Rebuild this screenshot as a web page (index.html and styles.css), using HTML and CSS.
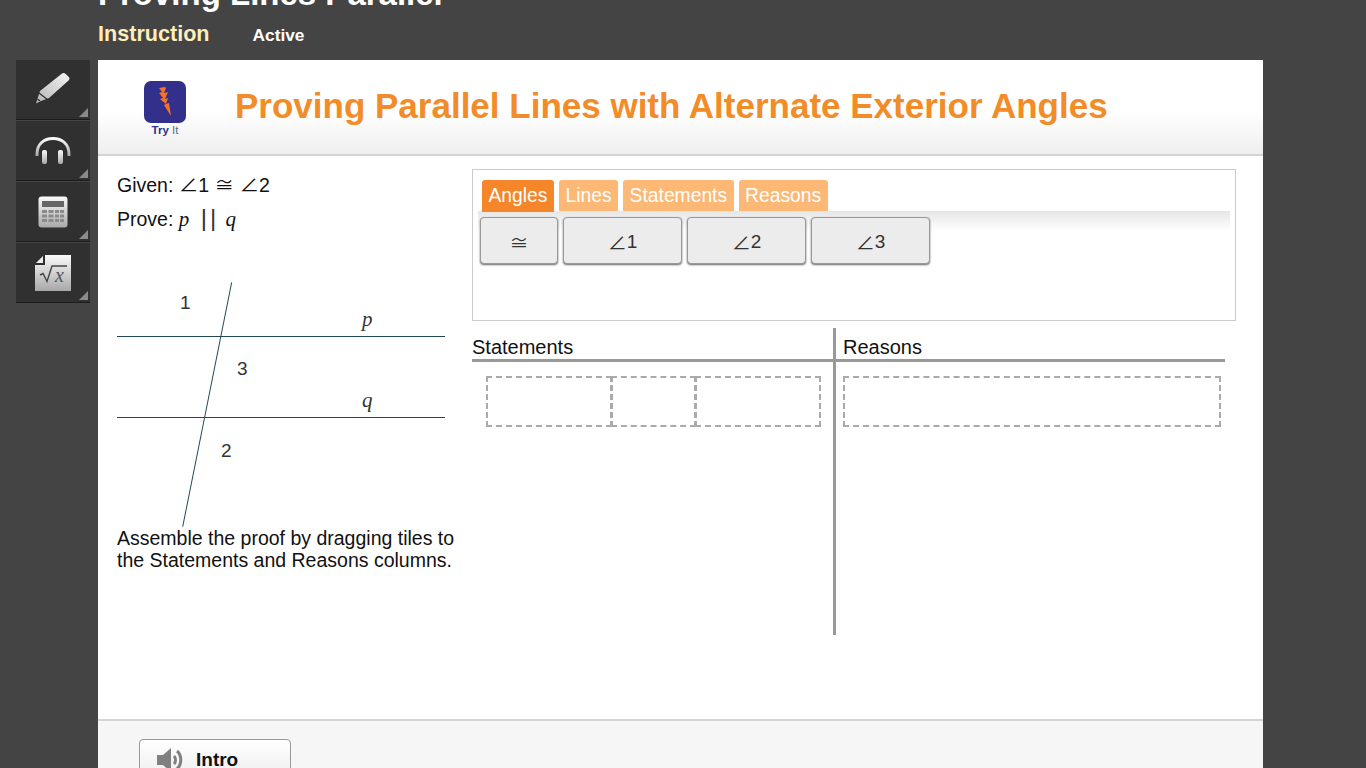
FILE: index.html
```html
<!DOCTYPE html>
<html lang="en">
<head>
<meta charset="utf-8">
<title>Proving Lines Parallel</title>
<link rel="stylesheet" href="styles.css">
</head>
<body>
<svg class="defs" width="0" height="0" aria-hidden="true">
  <defs>
    <linearGradient id="metal" x1="0" y1="0" x2="0" y2="1">
      <stop offset="0" stop-color="#fafafa"/>
      <stop offset="1" stop-color="#a8a8a8"/>
    </linearGradient>
    <linearGradient id="pen" x1="1" y1="0" x2="0" y2="1">
      <stop offset="0" stop-color="#f4f4f4"/>
      <stop offset="1" stop-color="#b5b5b5"/>
    </linearGradient>
  </defs>
</svg>
<header class="lesson-head">
  <h1 class="lesson-title">Proving Lines Parallel</h1>
  <div class="lesson-meta">
    <span class="lesson-kind">Instruction</span>
    <span class="lesson-state">Active</span>
  </div>
</header>
<div class="workspace">
  <nav class="toolbar">
    <button class="tool">
      <svg class="tool-icon" width="38" height="36" viewBox="0 0 38 36">
        <path d="M28 1.500c1-.8 2.300-.8 3.200 0l3.600 3.600c.9.900.9 2.200 0 3.100L15 26l-8 3-5 2.500 1.700-5.200L6 19z" fill="url(#pen)"/>
        <path d="M5 21l9 7M3.500 27l2.500 2" stroke="#2f2f2f" stroke-width="1.200" fill="none"/>
      </svg>
      <span class="corner"></span>
    </button>
    <button class="tool">
      <svg class="tool-icon" width="38" height="28" viewBox="0 0 38 28">
        <path d="M3 19V17C3 7 10 1.500 19 1.500S35 7 35 17v2" fill="none" stroke="url(#metal)" stroke-width="3"/>
        <rect x="8" y="13" width="5" height="14" rx="2" fill="url(#metal)"/>
        <rect x="24" y="13" width="5" height="14" rx="2" fill="url(#metal)"/>
      </svg>
      <span class="corner"></span>
    </button>
    <button class="tool">
      <svg class="tool-icon" width="30" height="32" viewBox="0 0 30 32">
        <rect x=".5" y=".5" width="29" height="31" rx="3" fill="url(#metal)"/>
        <rect x="4" y="5" width="22" height="6" fill="#666"/>
        <g fill="#8a8a8a">
          <rect x="4" y="14" width="5" height="3"/><rect x="10.500" y="14" width="5" height="3"/><rect x="17" y="14" width="4" height="3"/><rect x="22" y="14" width="4" height="3"/>
          <rect x="4" y="18.500" width="5" height="3"/><rect x="10.500" y="18.500" width="5" height="3"/><rect x="17" y="18.500" width="4" height="3"/><rect x="22" y="18.500" width="4" height="3"/>
          <rect x="4" y="23" width="5" height="3"/><rect x="10.500" y="23" width="5" height="3"/><rect x="17" y="23" width="4" height="3"/><rect x="22" y="23" width="4" height="3"/>
        </g>
      </svg>
      <span class="corner"></span>
    </button>
    <button class="tool">
      <svg class="tool-icon" width="36" height="36" viewBox="0 0 36 36">
        <path d="M10 0H36V36H0V10H10z" fill="url(#metal)"/>
        <path d="M1 8 8 1V8z" fill="#eee"/>
        <path d="M5 20l3-1.500 4 8L17 11H32" fill="none" stroke="#444" stroke-width="1.400"/>
        <text class="sqrt-x" x="20" y="27">x</text>
      </svg>
      <span class="corner"></span>
    </button>
  </nav>
  <main class="sheet">
    <div class="sheet-head">
      <div class="logo">
        <svg width="42" height="42" viewBox="0 0 42 42">
          <rect width="42" height="42" rx="7" fill="#33308b"/>
          <path d="M15 7l6-1 1 1-2 5 4-1-3 7 3-1-2 6 3-1 2 13-7-11 2-1-6-5 3-1-4-5 3-1z" fill="#f4712a"/>
        </svg>
        <span class="logo-text"><b>Try</b> <i>It</i></span>
      </div>
      <h2 class="sheet-title">Proving Parallel Lines with Alternate Exterior Angles</h2>
    </div>
    <div class="sheet-body">
      <section class="problem">
        <p class="given">Given: <span class="sym">∠</span>1 <span class="sym">≅</span> <span class="sym">∠</span>2</p>
        <p class="prove">Prove: <i class="var">p</i> <span class="bars">||</span> <i class="var">q</i></p>
        <svg class="figure" width="328" height="245" viewBox="0 0 328 245">
          <path d="M0 54.500H328M0 135.500H328M114.700.3 65.700 244.700" stroke="#1f4a55" stroke-width="1" fill="none"/>
          <text class="fig-num" x="63" y="27">1</text>
          <text class="fig-num" x="120" y="93">3</text>
          <text class="fig-num" x="104" y="175">2</text>
          <text class="fig-var" x="245" y="44">p</text>
          <text class="fig-var" x="245" y="125">q</text>
        </svg>
        <p class="instructions">Assemble the proof by dragging tiles to the Statements and Reasons columns.</p>
      </section>
      <section class="builder">
        <div class="bank">
          <div class="tabs">
            <span class="tab tab-on">Angles</span>
            <span class="tab">Lines</span>
            <span class="tab">Statements</span>
            <span class="tab">Reasons</span>
          </div>
          <div class="tiles">
            <span class="tile tile-small"><span class="sym">≅</span></span>
            <span class="tile"><span class="sym">∠</span>1</span>
            <span class="tile"><span class="sym">∠</span>2</span>
            <span class="tile"><span class="sym">∠</span>3</span>
          </div>
        </div>
        <div class="proof">
          <div class="col col-statements">
            <div class="col-title">Statements</div>
            <div class="drops">
              <span class="drop drop-a"></span><span class="drop drop-b"></span><span class="drop drop-c"></span>
            </div>
          </div>
          <div class="col col-reasons">
            <div class="col-title">Reasons</div>
            <div class="drops drops-reason">
              <span class="drop drop-r"></span>
            </div>
          </div>
        </div>
      </section>
    </div>
    <footer class="sheet-foot">
      <button class="intro">
        <svg width="30" height="26" viewBox="0 0 30 26">
          <path d="M1 8h6l8-7v24l-8-7H1z" fill="#808080"/>
          <path d="M18 9c2 2 2 6 0 8M21 4c5 4 5 14 0 18" fill="none" stroke="#808080" stroke-width="3"/>
        </svg>
        <span>Intro</span>
      </button>
    </footer>
  </main>
</div>
</body>
</html>
```
FILE: styles.css
```css
* { box-sizing: border-box; }
html, body { height: 100%; }
body {
  margin: 0;
  height: 768px;
  overflow: hidden;
  background: #444;
  font-family: "Liberation Sans", Arial, sans-serif;
  color: #111;
}
.defs { display: block; height: 0; }
p, h1, h2 { margin: 0; }

.lesson-head { height: 60px; padding-left: 98px; overflow: hidden; }
.lesson-title {
  margin-top: -23px;
  height: 37px;
  font-size: 33px;
  line-height: 34px;
  font-weight: 700;
  color: #fff;
  white-space: nowrap;
}
.lesson-meta { display: flex; align-items: baseline; gap: 43px; margin-top: 6px; }
.lesson-kind { font-size: 21.600px; line-height: 28px; font-weight: 700; color: #ffeebb; }
.lesson-state { font-size: 17.300px; font-weight: 700; color: #fff; }

.workspace { display: flex; padding-left: 16px; gap: 8px; height: 708px; }
.toolbar { width: 74px; display: flex; flex-direction: column; gap: 1px; }
.tool {
  position: relative;
  display: flex;
  align-items: center;
  justify-content: center;
  width: 74px;
  height: 60px;
  padding: 0;
  background: #303030;
  border: 0;
  border-bottom: 1px solid #1c1c1c;
}
.corner {
  position: absolute;
  right: 2px;
  bottom: 2px;
  width: 9px;
  height: 9px;
  background: #8a8a8a;
  clip-path: polygon(100% 0, 100% 100%, 0 100%);
}
.sqrt-x { font: italic 400 20px "Liberation Serif", serif; fill: #555; }

.sheet { width: 1165px; height: 708px; display: flex; flex-direction: column; background: #fff; }
.sheet-head {
  flex: none;
  height: 96px;
  display: flex;
  align-items: center;
  background: linear-gradient(#fff 55%, #eee);
  border-bottom: 2px solid #d4d4d4;
}
.logo { width: 137px; padding-left: 46px; display: flex; flex-direction: column; margin-top: 5px; }
.logo svg { display: block; }
.logo-text { width: 42px; text-align: center; font-size: 11.500px; line-height: 15px; color: #33308b; white-space: nowrap; }
.logo-text i { font-style: normal; font-weight: 400; color: #667; }
.sheet-title { font-size: 35px; line-height: 40px; font-weight: 700; color: #f28c28; margin-top: -2px; white-space: nowrap; }

.sheet-body { flex: none; height: 563px; display: flex; padding: 13px 0 0 19px; }
.problem { width: 355px; font-size: 19.500px; color: #111; }
.given { height: 34px; line-height: 32px; }
.prove { height: 34px; line-height: 32px; }
.sym { font-family: "Noto Sans CJK JP", "DejaVu Sans", sans-serif; line-height: 1; }
.var { font-family: "Liberation Serif", serif; font-size: 21px; }
.bars { color: #333; font-size: 24px; letter-spacing: 3px; margin: 0 1px 0 6px; line-height: 1; }
.figure { display: block; margin-top: 45px; }
.fig-num { font: 19px "Liberation Sans", sans-serif; fill: #333; }
.fig-var { font: italic 21px "Liberation Serif", serif; fill: #333; }
.instructions { width: 345px; line-height: 22px; }

.builder { width: 764px; flex: none; }
.bank { height: 152px; border: 1px solid #ccc; padding: 10px 5px 0 5px; }
.tabs { display: flex; gap: 5px; padding-left: 4px; height: 32px; }
.tab {
  height: 31px;
  padding: 0 6.500px;
  border-radius: 3px 3px 0 0;
  background: #fdb876;
  color: #fff;
  font-size: 19.300px;
  line-height: 32px;
}
.tab-on { background: #f5862a; height: 32px; }
.tiles {
  display: flex;
  gap: 5px;
  height: 54px;
  margin-top: -1px;
  padding: 6px 0 0 2px;
  background: linear-gradient(#e6e6e6, #fff 20px);
}
.tile {
  width: 119px;
  height: 47px;
  display: flex;
  align-items: center;
  justify-content: center;
  padding-top: 2px;
  background: #ececec;
  border: 1px solid #999;
  border-radius: 4px;
  box-shadow: 0 1px 2px #666;
  font-size: 19px;
  color: #333;
}
.tile-small { width: 78px; }

.proof { display: flex; margin-top: 7px; height: 307px; }
.col-statements { width: 361px; }
.col-reasons { width: 392px; border-left: 3px solid #999; }
.col-title {
  height: 34px;
  border-bottom: 3px solid #999;
  font-size: 20px;
  line-height: 38px;
  color: #111;
}
.col-reasons .col-title { padding-left: 7px; }
.drops { display: flex; margin: 14px 0 0 14px; }
.drops-reason { margin-left: 7px; }
.drop { display: block; height: 51px; border: 2px dashed #aaa; }
.drop-a { width: 126px; }
.drop-b { width: 85px; margin-left: -1px; }
.drop-c { width: 126px; margin-left: -1px; }
.drop-r { width: 378px; }

.sheet-foot {
  flex: none;
  height: 64px;
  background: #f6f6f6;
  border-top: 2px solid #d5d5d5;
  padding: 18px 0 0 41px;
}
.intro {
  display: flex;
  align-items: center;
  gap: 10px;
  width: 152px;
  height: 44px;
  padding: 0 0 3px 16px;
  background: linear-gradient(#fff, #ececec);
  border: 1px solid #999;
  border-radius: 4px;
  font: 700 19px "Liberation Sans", sans-serif;
  color: #111;
}
```
